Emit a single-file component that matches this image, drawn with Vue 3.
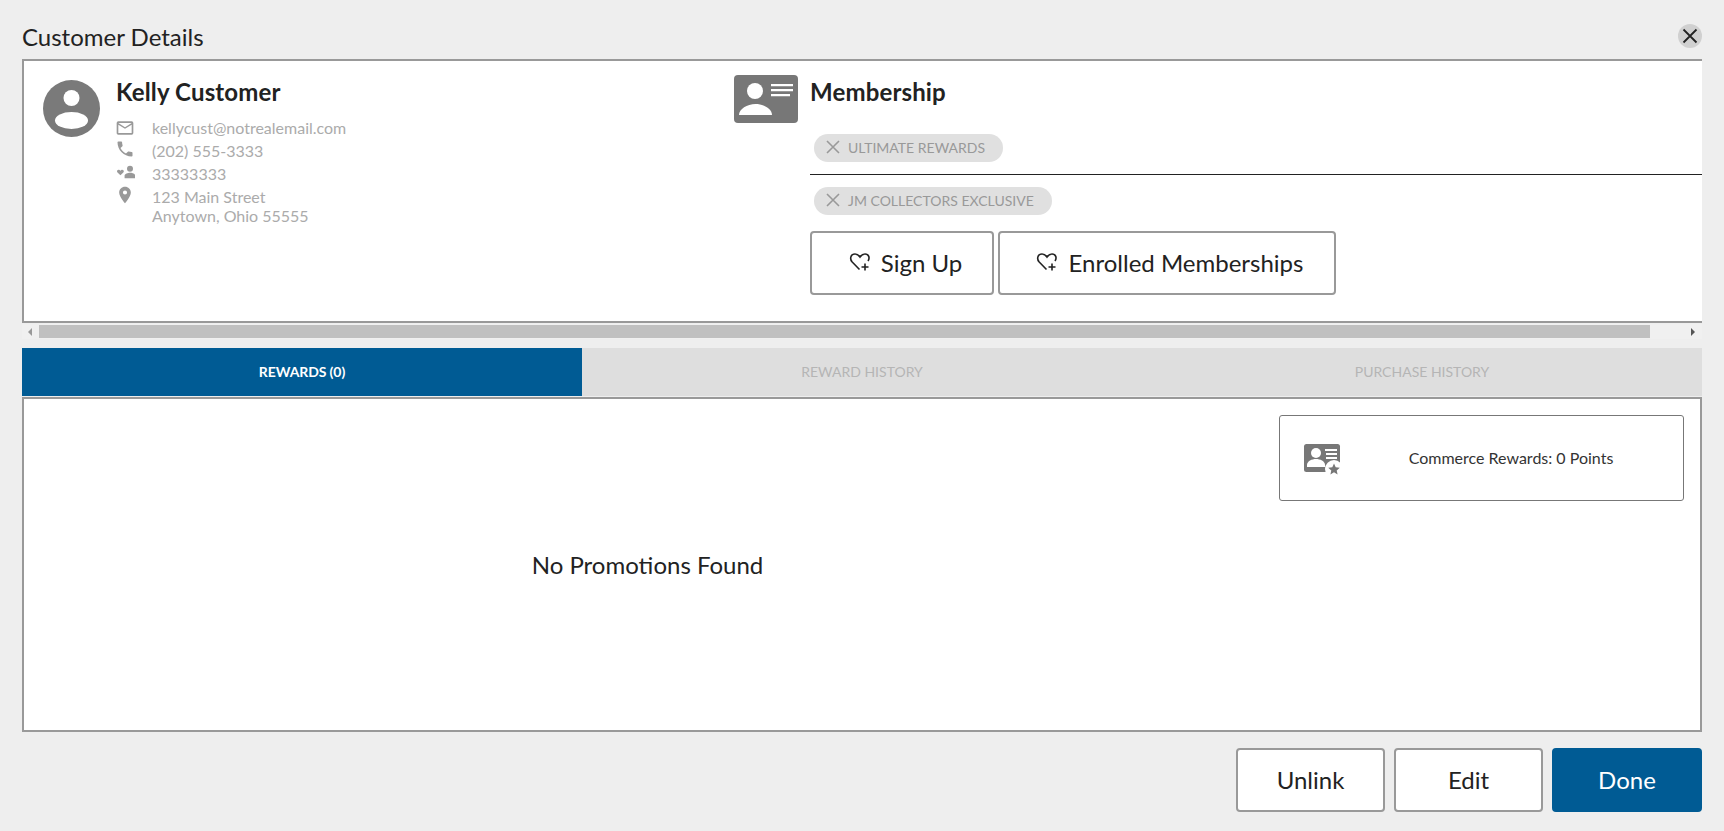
<script setup>
const contacts = [
  { id: 'mail', lines: ['kellycust@notrealemail.com'] },
  { id: 'phone', lines: ['(202) 555-3333'] },
  { id: 'loyal', lines: ['33333333'] },
  { id: 'place', lines: ['123 Main Street', 'Anytown, Ohio 55555'] }
]
const tabs = [
  { label: 'REWARDS (0)', active: true },
  { label: 'REWARD HISTORY', active: false },
  { label: 'PURCHASE HISTORY', active: false }
]
</script>

<template>
  <div class="page">
    <header class="head">
      <h1 class="title">Customer Details</h1>
      <button class="close" aria-label="Close">
        <svg width="16" height="16" viewBox="0 0 16 16"><path d="M1.500 1.500l13 13M14.500 1.500l-13 13" stroke="#222" stroke-width="1.800" fill="none"/></svg>
      </button>
    </header>

    <section class="panel">
      <div class="customer">
        <svg class="avatar" viewBox="0 0 57 57">
          <circle cx="28.500" cy="28.500" r="28.500" fill="#7a7a7a"/>
          <circle cx="28.500" cy="18" r="8" fill="#fff"/>
          <ellipse cx="28.500" cy="40.500" rx="16.500" ry="8.500" fill="#fff"/>
        </svg>
        <div>
          <h2 class="name">Kelly Customer</h2>
          <ul class="contacts">
            <li v-for="c in contacts" :key="c.id" class="contact">
              <span class="cicon">
                <svg v-if="c.id === 'mail'" class="mailicon" width="20" height="20" viewBox="0 0 24 24"><path fill="#999" d="M20 4H4a2 2 0 0 0-2 2v12c0 1.100.9 2 2 2h16a2 2 0 0 0 2-2V6a2 2 0 0 0-2-2zm0 14H4V8l8 5 8-5v10zm-8-7L4 6h16l-8 5z"/></svg>
                <svg v-else-if="c.id === 'phone'" width="20" height="20" viewBox="0 0 24 24"><path fill="#999" d="M6.600 10.800c1.400 2.800 3.800 5.100 6.600 6.600l2.200-2.200c.3-.3.700-.4 1-.2 1.100.4 2.300.6 3.600.6.600 0 1 .4 1 1V20c0 .6-.4 1-1 1C10.600 21 3 13.400 3 4c0-.6.400-1 1-1h3.500c.6 0 1 .4 1 1 0 1.300.2 2.500.6 3.600.1.300 0 .7-.2 1l-2.300 2.200z"/></svg>
                <svg v-else-if="c.id === 'loyal'" width="20" height="20" viewBox="0 0 24 24"><path fill="#999" d="M18 11.800a3.600 3.600 0 1 0 0-7.200 3.600 3.600 0 0 0 0 7.200zM18 13c-2.500 0-6.500 1.200-6.500 3.600v2.900h13v-2.900c0-2.400-4-3.600-6.500-3.600zM6.500 16L3 12.500C1.300 10.800 3.500 8.300 5.500 9.700l1 .8 1-.8c2-1.400 4.200 1.100 2.500 2.800z"/></svg>
                <svg v-else width="20" height="20" viewBox="0 0 24 24"><path fill="#999" d="M12 2C8.100 2 5 5.100 5 9c0 5.200 7 13 7 13s7-7.800 7-13c0-3.900-3.100-7-7-7zm0 9.500a2.500 2.500 0 1 1 0-5 2.500 2.500 0 0 1 0 5z"/></svg>
              </span>
              <div>
                <div v-for="l in c.lines" :key="l" class="cline">{{ l }}</div>
              </div>
            </li>
          </ul>
        </div>
      </div>

      <div class="membership">
        <svg class="cardicon" viewBox="0 0 64 48">
          <rect width="64" height="48" rx="4" fill="#777"/>
          <circle cx="21" cy="16" r="8" fill="#fff"/>
          <path d="M5 40c0-6 8-11 16.500-11S38 34 38 40z" fill="#fff"/>
          <path d="M37 9h22v2.200H37zM37 14h22v2.200H37zM37 19h19v2.200H37z" fill="#fff"/>
        </svg>
        <div class="mbody">
          <h2 class="mtitle">Membership</h2>
          <div class="chiprow first">
            <span class="chip">
              <svg width="14" height="14" viewBox="0 0 14 14"><path d="M1 1l12 12M13 1L1 13" stroke="#999" stroke-width="1.600" fill="none"/></svg>
              ULTIMATE REWARDS
            </span>
          </div>
          <div class="chiprow second">
            <span class="chip">
              <svg width="14" height="14" viewBox="0 0 14 14"><path d="M1 1l12 12M13 1L1 13" stroke="#999" stroke-width="1.600" fill="none"/></svg>
              JM COLLECTORS EXCLUSIVE
            </span>
          </div>
          <div class="mbtns">
            <button class="btn signup">
              <svg width="24" height="24" viewBox="0 0 24 24"><path d="M11.500 19.500L4.200 12C1.500 9 2.500 4 7 4c2.500 0 4 1.500 5 3 1-1.500 2.500-3 5-3 4 0 5 4 3 7" stroke="#222" stroke-width="1.600" fill="none"/><path d="M17 13.500v7M13.500 17h7" stroke="#222" stroke-width="1.600" fill="none"/></svg>
              Sign Up
            </button>
            <button class="btn enrolled">
              <svg width="24" height="24" viewBox="0 0 24 24"><path d="M11.500 19.500L4.200 12C1.500 9 2.500 4 7 4c2.500 0 4 1.500 5 3 1-1.500 2.500-3 5-3 4 0 5 4 3 7" stroke="#222" stroke-width="1.600" fill="none"/><path d="M17 13.500v7M13.500 17h7" stroke="#222" stroke-width="1.600" fill="none"/></svg>
              Enrolled Memberships
            </button>
          </div>
        </div>
      </div>
    </section>

    <div class="scrollbar">
      <span class="arrow left"></span>
      <span class="track"><span class="thumb"></span></span>
      <span class="arrow right"></span>
    </div>

    <nav class="tabs">
      <div v-for="t in tabs" :key="t.label" class="tab" :class="{ active: t.active }">{{ t.label }}</div>
    </nav>

    <section class="content">
      <div class="empty">No Promotions Found</div>
      <div class="side">
        <div class="points">
          <svg class="pointsicon" width="38" height="34" viewBox="0 0 38 34">
            <rect x="1" y="1" width="36" height="28" rx="2.500" fill="#777"/>
            <circle cx="13" cy="10" r="5" fill="#fff"/>
            <path d="M4 24v-2c0-4 5-6 9-6s9 2 9 6v2z" fill="#fff"/>
            <path d="M22 6h12v2H22zM23 10h11v2H23zM23 14h11v2H23z" fill="#fff"/>
            <circle cx="31" cy="26" r="9" fill="#fff"/>
            <path d="M31 20.500l1.700 3.800 4.100.4-3.100 2.700.9 4-3.600-2.100-3.600 2.100.9-4-3.100-2.700 4.100-.4z" fill="#777"/>
          </svg>
          <span class="pointstext">Commerce Rewards: 0 Points</span>
        </div>
      </div>
    </section>

    <footer class="foot">
      <button class="btn action">Unlink</button>
      <button class="btn action">Edit</button>
      <button class="btn action primary">Done</button>
    </footer>
  </div>
</template>

<style>
html, body { margin: 0; background: #eeeeee; }
</style>

<style scoped>
.page {
  box-sizing: border-box;
  height: 831px;
  padding: 0 22px;
  background: #eeeeee;
  font-family: Lato, "Open Sans", sans-serif;
  color: #222;
  overflow: hidden;
}
.head {
  height: 59px;
  display: flex;
  justify-content: space-between;
  align-items: flex-start;
}
.title {
  margin: 22px 0 0;
  font-size: 24px;
  line-height: 30px;
  font-weight: 400;
}
.close {
  margin-top: 24px;
  width: 24px;
  height: 24px;
  padding: 0;
  border: 0;
  border-radius: 50%;
  background: #d0d0d0;
  display: flex;
  align-items: center;
  justify-content: center;
}
.panel {
  box-sizing: border-box;
  height: 264px;
  background: #fff;
  border: 2px solid #999;
  border-right: 0;
  display: flex;
  padding: 14px 0 0 19px;
}
.customer {
  width: 691px;
  flex: none;
  display: flex;
  gap: 16px;
}
.avatar {
  width: 57px;
  height: 57px;
  margin-top: 5px;
  flex: none;
}
.name, .mtitle {
  margin: 1px 0 0;
  font-size: 24px;
  line-height: 32px;
  font-weight: 700;
  color: #222;
  letter-spacing: 0.15px;
}
.contacts {
  list-style: none;
  margin: 8px 0 0;
  padding: 0;
}
.contact {
  display: flex;
  min-height: 23px;
}
.cicon {
  width: 37px;
  flex: none;
  display: block;
  margin-left: -1px;
}
.cicon svg { display: block; }
.mailicon { margin-top: 2px; }
.cline {
  font-size: 16px;
  line-height: 19px;
  color: #ababab;
}
.contact:not(:last-child) .cline { line-height: 23px; }
.contact:last-child .cline:first-child { padding-top: 2px; }
.membership {
  flex: 1;
  display: flex;
  gap: 12px;
}
.cardicon {
  width: 64px;
  height: 48px;
  flex: none;
}
.mbody { flex: 1; }
.chiprow {
  padding-left: 4px;
  display: flex;
}
.chiprow.first {
  margin-top: 26px;
  padding-bottom: 12px;
  border-bottom: 1px solid #222;
}
.chiprow.second { margin-top: 12px; }
.chip {
  height: 28px;
  box-sizing: border-box;
  padding: 0 18px 2px 12px;
  border-radius: 14px;
  background: #e0e0e0;
  color: #999;
  font-size: 14px;
  display: inline-flex;
  align-items: center;
  gap: 8px;
}
.mbtns {
  display: flex;
  gap: 4px;
  margin-top: 16px;
}
.btn {
  box-sizing: border-box;
  height: 64px;
  background: #fff;
  border: 2px solid #999;
  border-radius: 4px;
  font-family: inherit;
  font-size: 24px;
  color: #222;
  display: inline-flex;
  align-items: center;
  justify-content: center;
  padding: 0 0 2px;
}
.signup { width: 184px; gap: 9px; padding-left: 6px; }
.enrolled { width: 338px; gap: 10px; padding-left: 4px; }
.scrollbar {
  height: 15px;
  margin: 1px 0 9px;
  display: flex;
  align-items: center;
  background: #f0f0f0;
}
.arrow {
  width: 0;
  height: 0;
  border-top: 4px solid transparent;
  border-bottom: 4px solid transparent;
  flex: none;
}
.arrow.left {
  border-right: 4px solid #999;
  margin: 0 7px 0 6px;
}
.arrow.right {
  border-left: 4px solid #555;
  margin: 0 7px 0 0;
}
.track { flex: 1; height: 13px; }
.thumb {
  display: block;
  width: 1611px;
  height: 13px;
  background: #c0c0c0;
}
.tabs {
  display: flex;
  height: 48px;
  background: #dedede;
}
.tab {
  flex: 1;
  box-sizing: border-box;
  padding-bottom: 2px;
  display: flex;
  align-items: center;
  justify-content: center;
  font-size: 14px;
  color: #b5b5b5;
}
.tab.active {
  background: #005b94;
  color: #fff;
  font-weight: 700;
  letter-spacing: -0.1px;
}
.content {
  box-sizing: border-box;
  height: 335px;
  margin-top: 1px;
  background: #fff;
  border: 2px solid #999;
  display: flex;
}
.empty {
  box-sizing: border-box;
  width: 1254px;
  padding: 151px 7px 0 0;
  text-align: center;
  font-size: 24px;
  line-height: 30px;
}
.side {
  flex: 1;
  display: flex;
  justify-content: flex-end;
  padding: 16px 16px 0 0;
}
.points {
  box-sizing: border-box;
  height: 86px;
  width: 405px;
  border: 1px solid #777;
  border-radius: 3px;
  display: flex;
  align-items: center;
  padding-left: 23px;
}
.pointsicon { flex: none; margin-top: 4px; }
.pointstext {
  flex: 1;
  text-align: center;
  font-size: 16px;
  color: #333;
  padding: 0 5px 2px 3px;
}
.foot {
  display: flex;
  justify-content: flex-end;
  gap: 9px;
  margin-top: 16px;
}
.action { width: 149px; }
.primary {
  width: 150px;
  background: #005b94;
  border-color: #005b94;
  color: #fff;
}
</style>
